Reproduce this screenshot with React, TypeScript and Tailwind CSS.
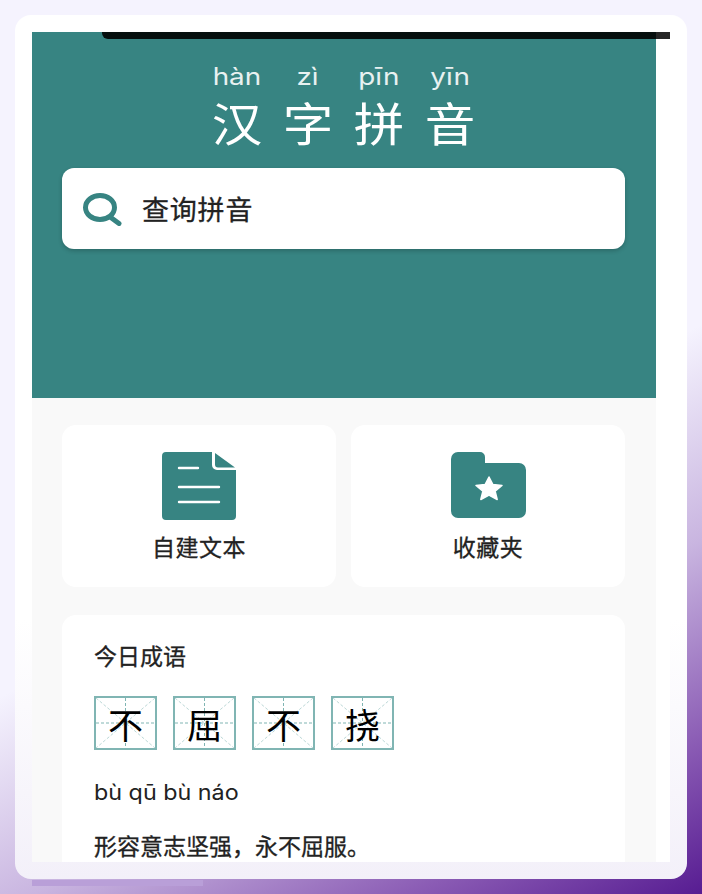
const TEAL = '#378482';
const CJK = "font-['Noto_Sans_CJK_SC','Noto_Sans',sans-serif]";

const TITLE = [
  { py: 'hàn', zi: '汉' },
  { py: 'zì', zi: '字' },
  { py: 'pīn', zi: '拼' },
  { py: 'yīn', zi: '音' },
];

function SearchIcon() {
  return (
    <svg width="40" height="35" viewBox="0 0 40 35" fill="none" aria-hidden>
      <ellipse cx="17" cy="16.500" rx="14.500" ry="12" stroke={TEAL} strokeWidth="5" />
      <path d="M28.500 27l7.500 5.500" stroke={TEAL} strokeWidth="5" strokeLinecap="round" />
    </svg>
  );
}

function DocIcon() {
  return (
    <svg width="74" height="68" viewBox="0 0 74 68" aria-hidden>
      <path
        d="M4 0h46v13a5 5 0 0 0 5 5h19v46a4 4 0 0 1-4 4H4a4 4 0 0 1-4-4V4a4 4 0 0 1 4-4z"
        fill={TEAL}
      />
      <path d="M53 1l20 14.500H56a3 3 0 0 1-3-3z" fill={TEAL} />
      <path d="M17 16h19M17 35h40M17 50h40" stroke="#fff" strokeWidth="2.400" strokeLinecap="round" />
    </svg>
  );
}

function FolderIcon() {
  return (
    <svg width="75" height="66" viewBox="0 0 75 66" aria-hidden>
      <path
        d="M7 0h22a5 5 0 0 1 5 5v6h34a7 7 0 0 1 7 7v41a7 7 0 0 1-7 7H7a7 7 0 0 1-7-7V7a7 7 0 0 1 7-7z"
        fill={TEAL}
      />
      <path
        d="M38 25l3.900 7.600 9.100.9-6.900 5.600 2.100 8.400-8.200-4.300-8.200 4.300 2.100-8.400-6.900-5.600 9.100-.9z"
        fill="#fff"
        stroke="#fff"
        strokeWidth="1.500"
        strokeLinejoin="round"
      />
    </svg>
  );
}

function TianBox({ zi }: { zi: string }) {
  return (
    <div className="relative flex h-[54px] w-[63px] items-center justify-center border-2 border-[#80b5b3]">
      <svg className="absolute inset-0 h-full w-full" viewBox="0 0 59 50" preserveAspectRatio="none" aria-hidden>
        <path d="M29.500 0v50M0 25h59" stroke="#80b5b3" strokeWidth="1" strokeDasharray="3 2" />
        <path d="M0 0l59 50M59 0L0 50" stroke="#bcd8d7" strokeWidth="1" strokeDasharray="3 2" />
      </svg>
      <span className="relative text-[35px] leading-none text-black">{zi}</span>
    </div>
  );
}

function ActionCard({ icon, label }: { icon: React.ReactNode; label: string }) {
  return (
    <div className="flex h-[162px] flex-1 flex-col items-center rounded-[14px] bg-white pt-[27px]">
      <div className="flex h-[68px] items-start">{icon}</div>
      <p className="mt-[13px] text-[23px] leading-[26px] tracking-[0.5px] text-[#222] [-webkit-text-stroke:0.3px_#222]">
        {label}
      </p>
    </div>
  );
}

export default function App() {
  return (
    <div
      className={`relative h-[894px] w-[702px] overflow-hidden bg-[linear-gradient(152deg,#f5f3fe_0%,#f5f3fe_55%,#c9b5e0_72%,#8a5bb4_88%,#571c92_100%)] p-[15px] ${CJK}`}
    >
      <div className="absolute bottom-[8px] left-[32px] h-[6px] w-[171px] bg-[#b99fd8]" />
      <div className="relative h-[864px] overflow-hidden rounded-[16px] bg-[linear-gradient(180deg,#ffffff_0%,#ffffff_70%,#f3f0f9_100%)] p-[17px]">
        <div className="relative h-[830px] w-[638px] overflow-hidden bg-white">
          <div className="absolute right-0 top-0 z-10 flex h-[7px] w-[568px] justify-end rounded-bl-[6px] bg-[#060f0e]">
            <div className="h-full w-[14px] bg-[#262626]" />
          </div>

          <div className="h-full w-[624px] bg-[#f9f9f9]">
            <header className="h-[366px] bg-[#378482] pl-[30px] pr-[31px] pt-[30px]">
              <div className="mx-auto grid w-[284px] grid-cols-4 text-white">
                {TITLE.map((t) => (
                  <div key={t.zi} className="flex flex-col items-center">
                    <span className="h-[30px] scale-x-[1.16] font-['Inter',sans-serif] text-[24px] leading-[30px] text-[#e8f1f1]">
                      {t.py}
                    </span>
                    <span className="mt-[3px] h-[52px] scale-x-[1.1] text-[46px] leading-[52px]">{t.zi}</span>
                  </div>
                ))}
              </div>
              <div className="mt-[21px] flex h-[81px] items-center gap-[19px] rounded-[12px] bg-white pl-[21px] shadow-[0_2px_4px_rgba(0,0,0,0.2)]">
                <SearchIcon />
                <span className="text-[27px] leading-none tracking-[0.8px] text-[#222] [-webkit-text-stroke:0.3px_#222]">
                  查询拼音
                </span>
              </div>
            </header>

            <main className="pl-[30px] pr-[31px] pt-[27px]">
              <div className="flex gap-[15px]">
                <ActionCard icon={<DocIcon />} label="自建文本" />
                <ActionCard icon={<FolderIcon />} label="收藏夹" />
              </div>

              <section className="mt-[28px] h-[247px] rounded-t-[14px] bg-white px-[32px] pt-[26px]">
                <p className="text-[23px] leading-[28px] text-[#222] [-webkit-text-stroke:0.3px_#222]">今日成语</p>
                <div className="mt-[27px] flex gap-[16px]">
                  {['不', '屈', '不', '挠'].map((zi, i) => (
                    <TianBox key={i} zi={zi} />
                  ))}
                </div>
                <p className="mt-[29px] origin-left scale-x-[1.11] font-['Inter',sans-serif] text-[21px] leading-[28px] text-[#222]">
                  bù qū bù náo
                </p>
                <p className="mt-[24px] text-[23px] leading-[28px] text-[#222] [-webkit-text-stroke:0.3px_#222]">
                  {'形容意志坚强\uFF0C永不屈服。'}
                </p>
              </section>
            </main>
          </div>
        </div>
      </div>
    </div>
  );
}
